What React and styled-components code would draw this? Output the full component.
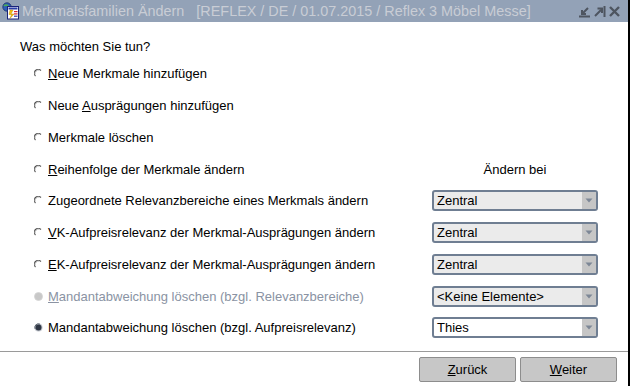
import React from 'react';
import styled, { createGlobalStyle } from 'styled-components';

const GlobalStyle = createGlobalStyle`
    html, body { margin: 0; padding: 0; background: #ffffff; }
    body { font-family: "Liberation Sans", Arial, sans-serif; }
`

const Window = styled.div`
    width: 630px;
    height: 386px;
    box-sizing: border-box;
    border-right: 2px solid #000000;
    display: flex;
    flex-direction: column;
    background: #ffffff;
    overflow: hidden;
`

const TitleBar = styled.div`
    height: 22px;
    flex: none;
    background: #93a2b7;
    display: flex;
    align-items: center;
    padding: 0 7px 0 2px;
`

const TitleText = styled.div`
    flex: 1;
    margin-left: 2px;
    font-size: 14.4px;
    color: #c9cdd5;
    white-space: pre;
`

const Controls = styled.div`
    display: flex;
    gap: 2px;
    align-items: center;
`

const Content = styled.div`
    flex: 1;
    padding: 17px 0 0 20px;
    font-size: 13px;
    color: #000000;
`

const Heading = styled.div`
    height: 16px;
    line-height: 16px;
    margin-bottom: 3px;
`

const Grid = styled.div`
    display: grid;
    grid-template-columns: 398px 166px;
    grid-auto-rows: 31.75px;
    margin-left: 14px;
`

const Option = styled.label`
    display: flex;
    align-items: center;
    gap: 5px;
    color: ${p => p.disabled ? '#8a93a3' : '#000000'};
`

const Cell = styled.div`
    display: flex;
    align-items: center;
    justify-content: center;
`

const Select = styled.div`
    width: 166px;
    height: 21px;
    box-sizing: border-box;
    border: 2px solid #6f7e92;
    border-radius: 3px;
    background: ${p => p.white ? '#ffffff' : '#ebebeb'};
    display: flex;
    align-items: stretch;
`

const SelectValue = styled.div`
    flex: 1;
    padding-left: 3px;
    line-height: 17px;
    font-size: 13px;
    color: #000000;
`

const SelectArrow = styled.div`
    width: 14px;
    background: #c6c6c6;
    display: flex;
    align-items: center;
    justify-content: center;
`

const Footer = styled.div`
    flex: none;
    border-top: 1px solid #9a9a9a;
    height: 35px;
    display: flex;
    justify-content: flex-end;
    align-items: flex-start;
    padding: 5px 11px 0 0;
    gap: 4px;
    box-sizing: border-box;
`

const Button = styled.button`
    width: 97px;
    height: 25px;
    background: #c7c7c7;
    border: 1px solid #8d8d8d;
    border-radius: 2px;
    font-family: "Liberation Sans", Arial, sans-serif;
    font-size: 13px;
    color: #000000;
    padding: 0;
`

const Radio = ({ state }) => {
    if (state === 'disabled') {
        return (
            <svg width="9" height="9" viewBox="0 0 9 9">
                <circle cx="4.5" cy="4.5" r="4" fill="#c8c8c8" stroke="#d4d4d4" strokeWidth="0.8" />
            </svg>
        );
    }
    if (state === 'checked') {
        return (
            <svg width="9" height="9" viewBox="0 0 9 9">
                <circle cx="4.5" cy="4.5" r="4" fill="#c0c4cc" />
                <circle cx="4.5" cy="4.5" r="3" fill="#2f3744" />
                <path d="M1.2 6 A3.6 3.6 0 0 1 6 1.2" stroke="#5b6470" strokeWidth="1" fill="none" />
            </svg>
        );
    }
    return (
        <svg width="9" height="9" viewBox="0 0 9 9">
            <path d="M1.5 7 A3.8 3.8 0 0 1 7 1.5" stroke="#505050" strokeWidth="1.1" fill="none" />
            <path d="M1 5.5 A3.8 3.8 0 0 1 5.5 1" stroke="#9a9a9a" strokeWidth="0.8" fill="none" />
        </svg>
    );
}

const Arrow = () => (
    <svg width="8" height="5" viewBox="0 0 8 5">
        <path d="M0.5 0.5 L7.5 0.5 L4 4.5 Z" fill="#7d8796" />
    </svg>
);

const AppIcon = () => (
    <svg width="18" height="18" viewBox="0 0 18 18">
        <circle cx="5" cy="5" r="4.2" fill="#2e5fb8" stroke="#1b2f6a" strokeWidth="0.8" />
        <path d="M2 4 Q4 2 6 4 T8 6" stroke="#4fb050" strokeWidth="1.4" fill="none" />
        <rect x="5.5" y="4.5" width="11" height="12.5" fill="#ffffff" stroke="#1a237a" strokeWidth="1" />
        <rect x="6.5" y="5.5" width="9" height="2" fill="#2b3ea8" />
        <path d="M8 8 L11 8 L9 12 L12 12 L8 16.5 L9.5 12.5 L7 12.5 Z" fill="#f4c20d" stroke="#b07b00" strokeWidth="0.4" />
        <rect x="12" y="9" width="3.5" height="1.2" fill="#d8262b" />
        <rect x="12" y="11.3" width="3.5" height="1.2" fill="#d8262b" />
        <rect x="12" y="13.6" width="3.5" height="1.2" fill="#2b3ea8" />
    </svg>
);

const MinIcon = () => (
    <svg width="13" height="13" viewBox="0 0 13 13">
        <path d="M10 3 L4.5 8.5 M4 5 L4 9 L8 9" stroke="#4e5560" strokeWidth="2" fill="none" />
        <rect x="1" y="10.5" width="11" height="2" fill="#4e5560" />
    </svg>
);

const MaxIcon = () => (
    <svg width="13" height="13" viewBox="0 0 13 13">
        <path d="M2 11 L8 5 M4.5 3.5 L9 3.5 L9 8" stroke="#4e5560" strokeWidth="2" fill="none" />
        <rect x="10.5" y="1" width="2" height="11" fill="#4e5560" />
    </svg>
);

const CloseIcon = () => (
    <svg width="13" height="13" viewBox="0 0 13 13">
        <path d="M2 2 L11 11 M11 2 L2 11" stroke="#4e5560" strokeWidth="2.4" fill="none" />
    </svg>
);

const options = [
    { key: 'N', rest: 'eue Merkmale hinzufügen' },
    { pre: 'Neue ', key: 'A', rest: 'usprägungen hinzufügen' },
    { rest: 'Merkmale löschen' },
    { key: 'R', rest: 'eihenfolge der Merkmale ändern' },
    { rest: 'Zugeordnete Relevanzbereiche eines Merkmals ändern', select: 'Zentral' },
    { key: 'V', rest: 'K-Aufpreisrelevanz der Merkmal-Ausprägungen ändern', select: 'Zentral' },
    { key: 'E', rest: 'K-Aufpreisrelevanz der Merkmal-Ausprägungen ändern', select: 'Zentral' },
    { key: 'M', rest: 'andantabweichung löschen (bzgl. Relevanzbereiche)', select: '<Keine Elemente>', state: 'disabled' },
    { rest: 'Mandantabweichung löschen (bzgl. Aufpreisrelevanz)', select: 'Thies', state: 'checked', white: true },
];

export default function App() {
    return (
        <>
        <GlobalStyle />
        <Window>
            <TitleBar>
                <AppIcon />
                <TitleText>{'Merkmalsfamilien Ändern   [REFLEX / DE / 01.07.2015 / Reflex 3 Möbel Messe]'}</TitleText>
                <Controls>
                    <MinIcon />
                    <MaxIcon />
                    <CloseIcon />
                </Controls>
            </TitleBar>
            <Content>
                <Heading>Was möchten Sie tun?</Heading>
                <Grid>
                    {options.map((o, i) => (
                        <React.Fragment key={i}>
                            <Option disabled={o.state === 'disabled'}>
                                <Radio state={o.state} />
                                <span>{o.pre}{o.key && <u>{o.key}</u>}{o.rest}</span>
                            </Option>
                            <Cell>
                                {i === 3 && <span>Ändern bei</span>}
                                {o.select && (
                                    <Select white={o.white}>
                                        <SelectValue>{o.select}</SelectValue>
                                        <SelectArrow><Arrow /></SelectArrow>
                                    </Select>
                                )}
                            </Cell>
                        </React.Fragment>
                    ))}
                </Grid>
            </Content>
            <Footer>
                <Button><u>Z</u>urück</Button>
                <Button><u>W</u>eiter</Button>
            </Footer>
        </Window>
        </>
    );
}
